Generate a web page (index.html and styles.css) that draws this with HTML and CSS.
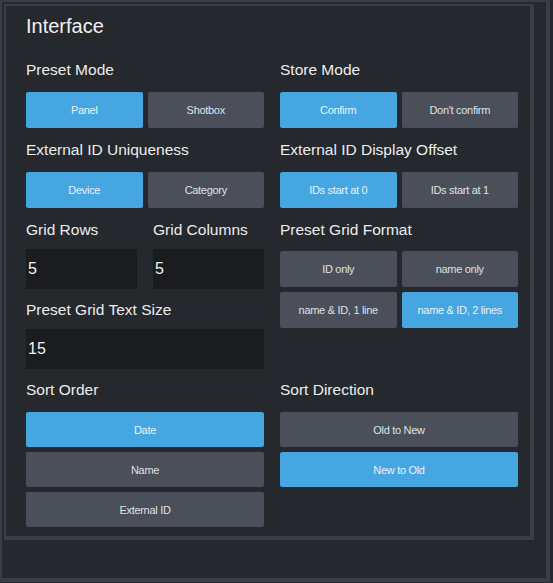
FILE: index.html
```html
<!DOCTYPE html>
<html>
<head>
<meta charset="utf-8">
<link rel="stylesheet" href="styles.css">
</head>
<body>
<div class="frame">
  <div class="panel">
    <h1 class="title">Interface</h1>
    <div class="grid">
      <div class="section">
        <div class="label">Preset Mode</div>
        <div class="btns two">
          <button class="btn on">Panel</button>
          <button class="btn">Shotbox</button>
        </div>
      </div>
      <div class="section">
        <div class="label">Store Mode</div>
        <div class="btns two">
          <button class="btn on">Confirm</button>
          <button class="btn">Don't confirm</button>
        </div>
      </div>
      <div class="section">
        <div class="label">External ID Uniqueness</div>
        <div class="btns two">
          <button class="btn on">Device</button>
          <button class="btn">Category</button>
        </div>
      </div>
      <div class="section">
        <div class="label">External ID Display Offset</div>
        <div class="btns two">
          <button class="btn on">IDs start at 0</button>
          <button class="btn">IDs start at 1</button>
        </div>
      </div>
      <div class="section">
        <div class="pair">
          <div>
            <div class="label label-input">Grid Rows</div>
            <input class="field" type="text" value="5">
          </div>
          <div>
            <div class="label label-input">Grid Columns</div>
            <input class="field" type="text" value="5">
          </div>
        </div>
        <div class="label label-input spaced">Preset Grid Text Size</div>
        <input class="field" type="text" value="15">
      </div>
      <div class="section">
        <div class="label label-format">Preset Grid Format</div>
        <div class="btns two wrap">
          <button class="btn">ID only</button>
          <button class="btn">name only</button>
          <button class="btn">name &amp; ID, 1 line</button>
          <button class="btn on">name &amp; ID, 2 lines</button>
        </div>
      </div>
      <div class="section">
        <div class="label label-sort">Sort Order</div>
        <div class="btns stack">
          <button class="btn sbtn on">Date</button>
          <button class="btn sbtn">Name</button>
          <button class="btn sbtn">External ID</button>
        </div>
      </div>
      <div class="section">
        <div class="label label-sort">Sort Direction</div>
        <div class="btns stack">
          <button class="btn sbtn">Old to New</button>
          <button class="btn sbtn on">New to Old</button>
        </div>
      </div>
    </div>
  </div>
</div>
</body>
</html>
```
FILE: styles.css
```css
html, body {
  margin: 0;
  padding: 0;
  background: #25282d;
  font-family: "Liberation Sans", Arial, sans-serif;
}

.frame {
  width: 550px;
  height: 582px;
  box-sizing: border-box;
  border-style: solid;
  border-color: #3a3d44;
  border-width: 2px 4px 4px 2px;
  padding: 2px;
  background: #25282d;
}

.panel {
  width: 530px;
  box-sizing: border-box;
  border-style: solid;
  border-color: #3a3d44;
  border-width: 2px 4px 4px 2px;
  padding: 8px 12px 9px 20px;
  background: #25282d;
}

.title {
  margin: 0;
  font-size: 20px;
  line-height: 24px;
  font-weight: normal;
  color: #f0f1f2;
}

.grid {
  margin-top: 22px;
  display: grid;
  grid-template-columns: 238px 238px;
  column-gap: 16px;
  row-gap: 12px;
}

.label {
  font-size: 15.5px;
  line-height: 20px;
  color: #eceded;
  margin-bottom: 12px;
  white-space: nowrap;
}

.label-input {
  margin-bottom: 9px;
}

.label-format {
  margin-bottom: 11px;
}

.label-sort {
  margin-top: -1px;
  margin-bottom: 12px;
}

.spaced {
  margin-top: 11px;
}

.btns {
  display: grid;
  gap: 5px;
}

.two {
  grid-template-columns: 1fr 1fr;
}

.stack {
  grid-template-columns: 1fr;
}

.btn {
  display: block;
  height: 36px;
  margin: 0;
  padding: 0;
  border: none;
  border-radius: 2px;
  background: #4a4f5a;
  color: #dfe2e6;
  font-family: "Liberation Sans", Arial, sans-serif;
  font-size: 11px;
  letter-spacing: -0.3px;
  text-align: center;
}

.sbtn {
  height: 35px;
}

.btn.on {
  background: #46a6e2;
  color: #e6f2fb;
}

.pair {
  display: grid;
  grid-template-columns: 1fr 1fr;
  column-gap: 16px;
}

.field {
  display: block;
  width: 100%;
  height: 40px;
  box-sizing: border-box;
  margin: 0;
  padding: 0 2px;
  border: none;
  outline: none;
  background: #1b1c1f;
  color: #f2f2f2;
  font-family: "Liberation Sans", Arial, sans-serif;
  font-size: 16px;
}
```
